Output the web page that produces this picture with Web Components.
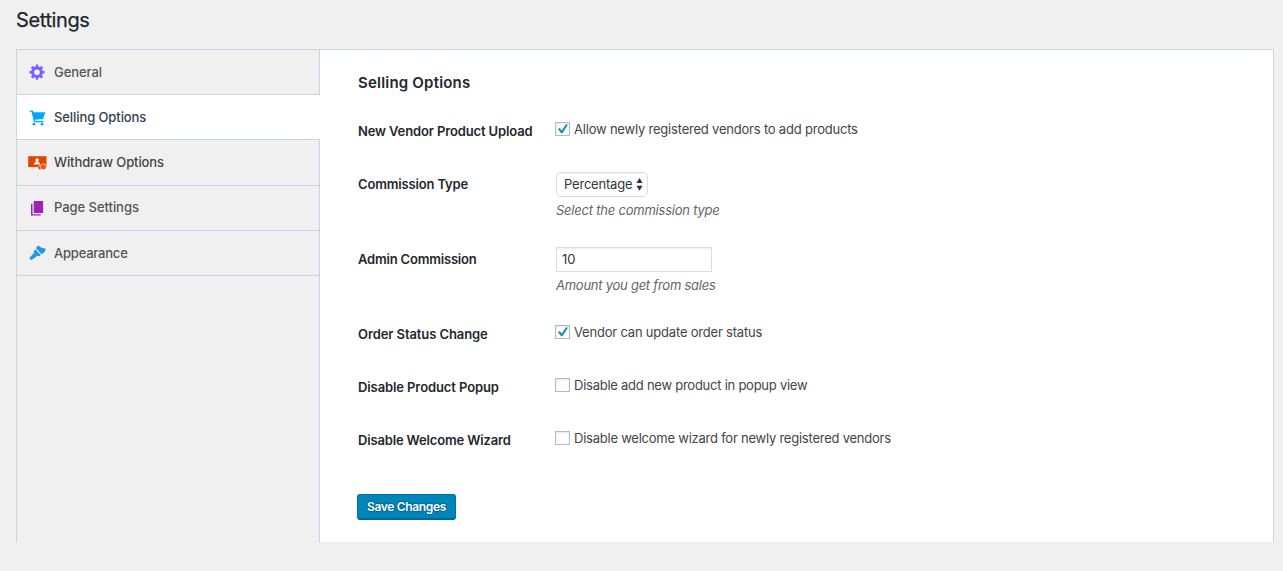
<!DOCTYPE html>
<html lang="en">
<head>
<meta charset="utf-8">
<title>Settings</title>
<style>
html,body{margin:0;height:571px;overflow:hidden;background:#f0f0f0;font-family:Inter,"Liberation Sans",sans-serif;font-size:13px;color:#444}
</style>
</head>
<body>
<settings-page heading="Settings">
  <nav-item slot="nav" icon="gear" style="--ls:-.06px">General</nav-item>
  <nav-item slot="nav" icon="cart" active style="--ls:-.09px">Selling Options</nav-item>
  <nav-item slot="nav" icon="withdraw" strong style="--h:46px;--ls:-.1px">Withdraw Options</nav-item>
  <nav-item slot="nav" icon="pages" style="--ls:-.05px;--shift:-1px">Page Settings</nav-item>
  <nav-item slot="nav" icon="brush" style="--ls:-.22px">Appearance</nav-item>
  <setting-row label="New Vendor Product Upload" style="--ls:-.13px"><check-box checked style="--text:-.205px">Allow newly registered vendors to add products</check-box></setting-row>
  <setting-row label="Commission Type" hint="Select the commission type" tall style="--ls:-.15px;--hint:-.22px"><select-box>Percentage</select-box></setting-row>
  <setting-row label="Admin Commission" hint="Amount you get from sales" tall style="--ls:-.19px;--hint:-.25px"><text-box>10</text-box></setting-row>
  <setting-row label="Order Status Change" style="--ls:-.09px"><check-box checked style="--text:-.2px">Vendor can update order status</check-box></setting-row>
  <setting-row label="Disable Product Popup" style="--ls:-.1px"><check-box style="--text:-.25px">Disable add new product in popup view</check-box></setting-row>
  <setting-row label="Disable Welcome Wizard" style="--ls:-.16px"><check-box style="--text:-.235px">Disable welcome wizard for newly registered vendors</check-box></setting-row>
  <save-button slot="actions">Save Changes</save-button>
</settings-page>
<script>
const define = (name, render) => customElements.define(name, class extends HTMLElement {
  constructor() { super(); this.attachShadow({mode: 'open'}); }
  connectedCallback() { this.shadowRoot.innerHTML = render(this); }
});

const icons = {
  gear: '<path fill="#7b61ff" fill-rule="evenodd" d="M7.900 .6h2.200l.3 2 1.300.5 1.700-1.100 1.700 1.700-1.100 1.700.5 1.300 2 .3v2.400l-2 .3-.5 1.300 1.100 1.700-1.700 1.700-1.700-1.100-1.300.5-.3 2H7.900l-.3-2-1.300-.5-1.700 1.100-1.700-1.700L4 11l-.5-1.300-2-.3V7l2-.3L4 5.400 2.900 3.700 4.600 2l1.700 1.100 1.300-.5zM9 5.400a2.800 2.800 0 1 0 0 5.600 2.800 2.800 0 0 0 0-5.600z"/>',
  cart: '<path fill="#00a9ff" d="M1.600 1.600h3.200l.8 1.700h11.700l-2.300 6.600-8.200.9.300 1.300h8.200v1.100H6L3.500 2.800H1.600z"/><circle cx="6" cy="15.200" r="1.400" fill="#00a9ff"/><circle cx="14" cy="15.200" r="1.400" fill="#00a9ff"/>',
  withdraw: '<path fill="#df4600" d="M.2 2.200h18.300v10.900H.2z"/><path fill="#f0f0f0" d="M6 10.500V9.600q0-.9 1.800-1.400.3-.2.1-.6-.9-1.200-.5-2.200.5-1.100 1.700-1.100t1.700 1.100q.3 1-.6 2.200-.2.400.1.600 1.700.5 1.700 1.400v.9z"/><g fill="#df4600" stroke="#f0f0f0" stroke-width=".7"><circle cx="12" cy="13.800" r="2.100"/><circle cx="15.400" cy="12.800" r="2.900"/></g><path d="M14.700 11.600l1.700 1.200-1.400 1.300" fill="none" stroke="#f0a080" stroke-width=".6"/>',
  pages: '<path fill="#9c22b5" d="M5.700 1h9.400v11.900H5.700zM3 3.700h1.500v10.600h8.200v1.300H3z"/>',
  brush: '<path fill="#2196e3" d="M9.100 1.200l1.700-.5 2.700 2 4.300 1.100q-1.100 4.200-4.100 5.400L8.100 3.500zM7.300 4.500l5.600 5.500-1.500 1.300-1.900-.5-5.300 3.800q-1.400.7-2.300-.3-.7-1 .1-2.100l4.300-4.700-.7-1.400z"/>'
};

define('nav-icon', e => `<style>:host{display:block;width:19px;height:17px;flex:none}svg{display:block;overflow:visible}</style>
<svg width="19" height="17" viewBox="0 0 19 17">${icons[e.getAttribute('name')]}</svg>`);

define('nav-item', e => `<style>
:host{display:flex;box-sizing:border-box;height:var(--h,45px);border-bottom:1px solid #c3d5e0;border-right:1px solid #c3d5e0;padding:14px 0 0 11px;column-gap:7px;font-weight:500;line-height:16px;color:#555;background:#f0f0f0;letter-spacing:var(--ls,0)}
:host([active]){background:#fff;border-right-color:#fff;color:#2f4053}
:host([strong]){color:#444}
span{margin-top:var(--shift,0)}
:host([icon=brush]) span{margin-top:0}
</style><nav-icon name="${e.getAttribute('icon')}"></nav-icon><span><slot></slot></span>`);

define('setting-row', e => `<style>
:host{display:grid;grid-template-columns:198px 1fr;height:53px}
:host([tall]){height:75px}
.label{padding-top:18px;line-height:16px;font-weight:600;color:#23282d;letter-spacing:var(--ls)}
.control{display:flex;flex-direction:column;align-items:flex-start;padding-top:14px}
.hint{margin-top:5px;line-height:16px;font-style:italic;color:#666;letter-spacing:var(--hint)}
</style><div class="label">${e.getAttribute('label')}</div>
<div class="control"><slot></slot>${e.hasAttribute('hint') ? `<div class="hint">${e.getAttribute('hint')}</div>` : ''}</div>`);

define('check-box', e => `<style>
:host{display:flex;align-items:flex-start;line-height:16px;margin:2px 0 0 -1px;gap:4px;letter-spacing:var(--text)}
i{box-sizing:border-box;width:15px;height:14px;margin-top:1px;border:1px solid #b4b9be;background:#fff;box-shadow:inset 0 1px 2px rgba(0,0,0,.1)}
svg{display:block;overflow:visible}
</style><i>${e.hasAttribute('checked') ? '<svg width="13" height="12" viewBox="0 0 13 12"><path fill="#1e8cbe" d="M1.900 6.100l1.900-1 1.900 2.300 4.200-6.200 2 .6-5.400 8.400H5z"/></svg>' : ''}</i><span><slot></slot></span>`);

define('select-box', () => `<style>
:host{display:flex;align-items:center;justify-content:space-between;box-sizing:border-box;width:92px;height:25px;border:1px solid #ddd;border-radius:5px;background:#fff;padding:0 4px 0 7px;color:#32373c;letter-spacing:-.2px;box-shadow:inset 0 1px 1px rgba(0,0,0,.03)}
span{line-height:16px;padding-bottom:1px}
svg{flex:none}
</style><span><slot></slot></span><svg width="7" height="13" viewBox="0 0 7 13"><path fill="#333" d="M3.500 0L6.600 5H.4zM.4 7.800h6.200l-3.100 5z"/></svg>`);

define('text-box', () => `<style>
:host{display:flex;align-items:center;box-sizing:border-box;width:156px;height:25px;border:1px solid #ddd;padding:0 0 1px 5px;line-height:16px;background:#fff;color:#32373c;box-shadow:inset 0 1px 2px rgba(0,0,0,.07)}
</style><slot></slot>`);

define('save-button', () => `<style>
:host{display:flex;align-items:center;justify-content:center;box-sizing:border-box;width:99px;height:26px;border:1px solid #0073aa;border-bottom:2px solid #006799;border-radius:3px;background:#0085ba;color:#fff;font-size:12px;font-weight:600;letter-spacing:-.33px;text-shadow:0 -1px 1px #006799,1px 0 1px #006799,0 1px 1px #006799,-1px 0 1px #006799}
</style><slot></slot>`);

define('settings-page', e => `<style>
:host{display:block;padding:0 9px 0 16px}
h1{margin:0;height:49px;padding-top:8px;box-sizing:border-box;font-size:20px;line-height:24px;font-weight:400;letter-spacing:-.38px;color:#23282d;-webkit-text-stroke:.25px #23282d}
.panel{display:grid;grid-template-columns:303px 1fr;height:493px;box-sizing:border-box;border:1px solid #c8d7e1;border-bottom:0;background:#fff}
nav{display:flex;flex-direction:column;background:#f0f0f0}
nav::after{content:"";flex:1;border-right:1px solid #c3d5e0}
main{padding-left:38px}
h2{margin:0;height:55px;box-sizing:border-box;padding-top:23px;font-size:15px;line-height:20px;font-weight:600;letter-spacing:.2px;color:#23282d}
footer{padding-top:27px;margin-left:-1px}
</style><h1>${e.getAttribute('heading')}</h1>
<div class="panel"><nav><slot name="nav"></slot></nav><main><h2>Selling Options</h2><slot></slot><footer><slot name="actions"></slot></footer></main></div>`);
</script>
</body>
</html>
